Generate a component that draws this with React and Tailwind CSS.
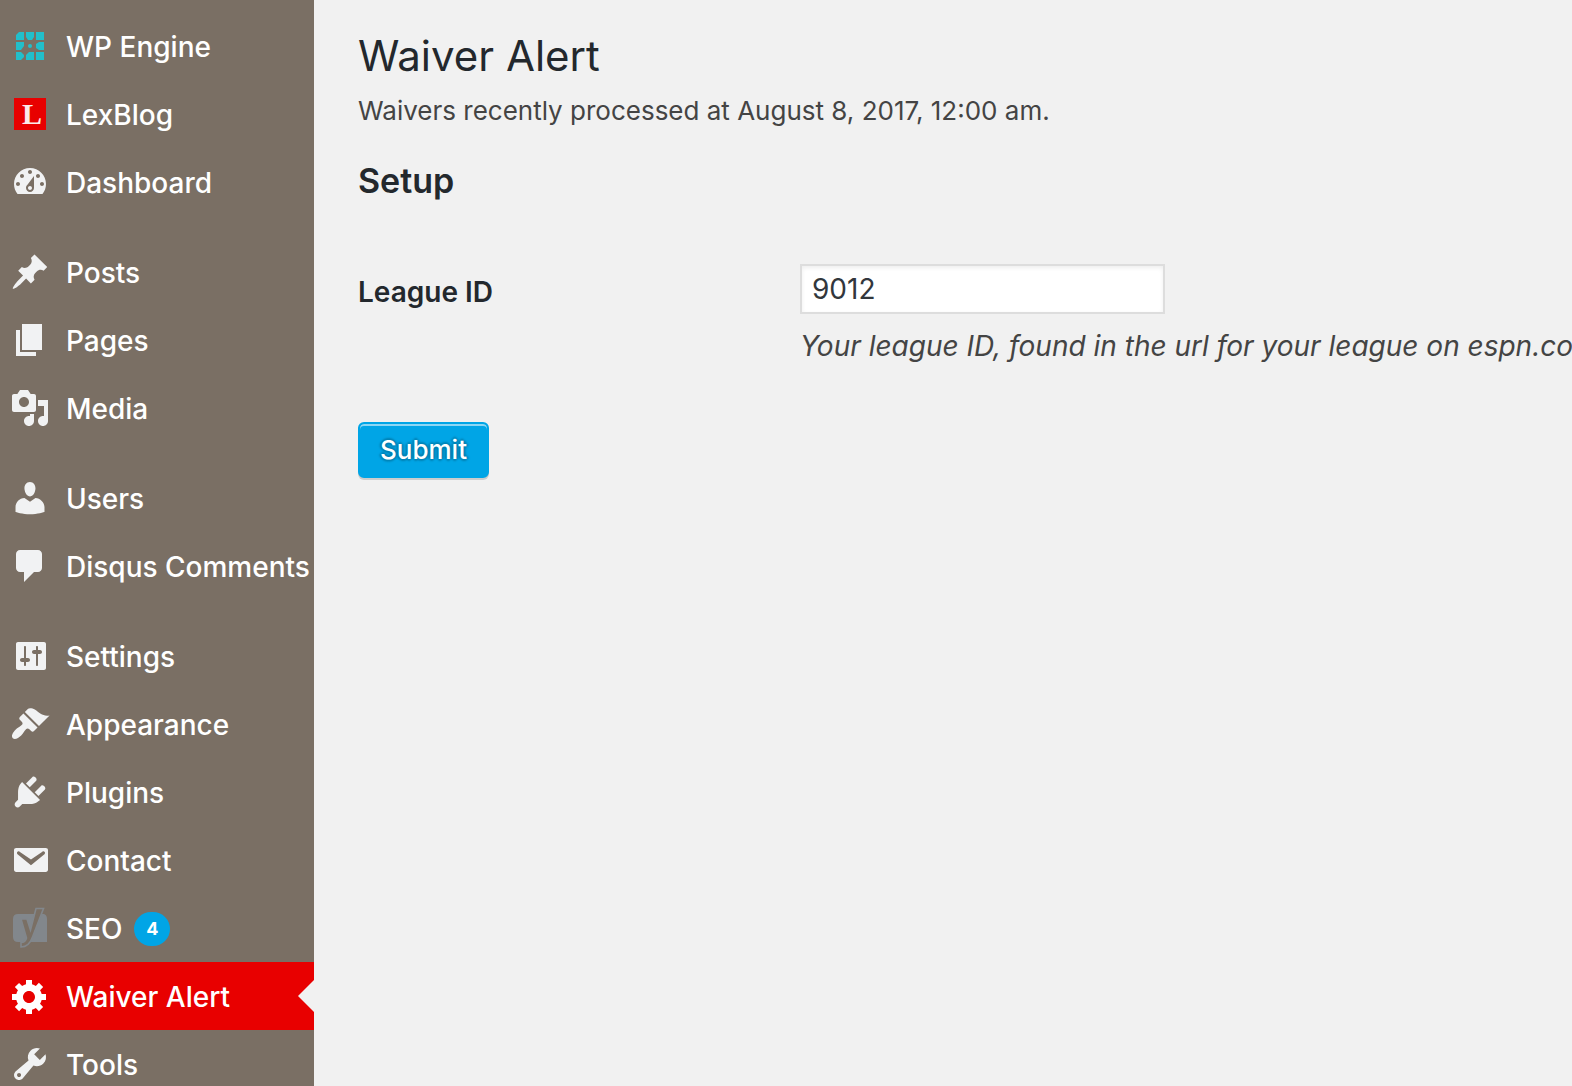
const icons = {
  dashboard:
    'M3.76 16h12.48c1.1-1.37 1.76-3.11 1.76-5 0-4.42-3.58-8-8-8s-8 3.58-8 8c0 1.89.66 3.63 1.76 5zM10 4c.55 0 1 .45 1 1s-.45 1-1 1-1-.45-1-1 .45-1 1-1zM6 6c.55 0 1 .45 1 1s-.45 1-1 1-1-.45-1-1 .45-1 1-1zm8 0c.55 0 1 .45 1 1s-.45 1-1 1-1-.45-1-1 .45-1 1-1zm-5.37 5.55L12 7v6c0 1.1-.9 2-2 2s-2-.9-2-2c0-.57.24-1.08.63-1.45zM4 10c.55 0 1 .45 1 1s-.45 1-1 1-1-.45-1-1 .45-1 1-1zm12 0c.55 0 1 .45 1 1s-.45 1-1 1-1-.45-1-1 .45-1 1-1zm-5 3c0-.55-.45-1-1-1s-1 .45-1 1 .45 1 1 1 1-.45 1-1z',
  posts:
    'M10.44 3.02l1.82-1.82 6.36 6.35-1.83 1.82c-1.05-.68-2.48-.57-3.41.36l-.75.75c-.92.93-1.04 2.35-.35 3.41l-1.83 1.82-2.41-2.41-2.8 2.79c-.42.42-3.38 2.71-3.8 2.29s1.86-3.39 2.28-3.81l2.79-2.79L4.1 9.36l1.83-1.82c1.05.69 2.48.57 3.4-.36l.75-.75c.93-.92 1.05-2.35.36-3.41z',
  pages: 'M6 15V2h10v13H6zm-1 1h8v2H3V5h2v11z',
  media:
    'M13 11V4c0-.55-.45-1-1-1h-1.67L9 1H5L3.67 3H2c-.55 0-1 .45-1 1v7c0 .55.45 1 1 1h10c.55 0 1-.45 1-1zM7 4.5c1.38 0 2.5 1.12 2.5 2.5S8.38 9.5 7 9.5 4.5 8.38 4.5 7 5.62 4.5 7 4.5zM14 6h5v10.5c0 1.38-1.12 2.5-2.5 2.5S14 17.88 14 16.5s1.12-2.5 2.5-2.5c.17 0 .34.02.5.05V9h-3V6zm-4 8.05V13h2v3.5c0 1.38-1.12 2.5-2.5 2.5S7 17.88 7 16.5 8.12 14 9.5 14c.17 0 .34.02.5.05z',
  users:
    'M10 9.25c-2.27 0-2.73-3.44-2.73-3.44C7 4.02 7.82 2 9.97 2c2.16 0 2.98 2.02 2.71 3.81 0 0-.41 3.44-2.68 3.44zm0 2.57L12.72 10c2.39 0 4.52 2.33 4.52 4.53v2.49s-3.65 1.13-7.24 1.13c-3.65 0-7.24-1.13-7.24-1.13v-2.49c0-2.25 1.94-4.48 4.47-4.48z',
  comments:
    'M5 2h9c1.1 0 2 .9 2 2v7c0 1.1-.9 2-2 2h-2l-5 5v-5H5c-1.1 0-2-.9-2-2V4c0-1.1.9-2 2-2z',
  settings:
    'M18 16V4c0-.55-.45-1-1-1H4c-.55 0-1 .45-1 1v12c0 .55.45 1 1 1h13c.55 0 1-.45 1-1zM8 11h1c.55 0 1 .45 1 1s-.45 1-1 1H8v1.5c0 .28-.22.5-.5.5s-.5-.22-.5-.5V13H6c-.55 0-1-.45-1-1s.45-1 1-1h1V5.5c0-.28.22-.5.5-.5s.5.22.5.5V11zm5-2h-1c-.55 0-1-.45-1-1s.45-1 1-1h1V5.5c0-.28.22-.5.5-.5s.5.22.5.5V7h1c.55 0 1 .45 1 1s-.45 1-1 1h-1v5.5c0 .28-.22.5-.5.5s-.5-.22-.5-.5V9z',
  appearance:
    'M14.48 11.06L7.41 3.99l1.5-1.5c.5-.56 2.3-.47 3.51.32 1.21.8 1.43 1.28 2.91 2.1 1.18.64 2.45 1.26 4.45.85zm-.71.71L6.7 4.7 4.93 6.47c-.39.39-.39 1.02 0 1.41l1.06 1.06c.39.39.39 1.03 0 1.42-.6.6-1.43 1.11-2.21 1.69-.35.26-.7.53-1.01.84C1.43 14.23.4 16.08 1.4 17.07c.99 1 2.84-.03 4.18-1.36.31-.31.58-.66.85-1.02.57-.78 1.08-1.61 1.69-2.21.39-.39 1.02-.39 1.41 0l1.06 1.06c.39.39 1.02.39 1.41 0z',
  plugins:
    'M13.11 4.36L9.87 7.6 8 5.73l3.24-3.24c.35-.34 1.05-.2 1.56.32.52.51.66 1.21.31 1.55zm-8 1.77l.91-1.12 9.01 9.01-1.19.84c-.71.71-2.63 1.16-3.82 1.16H6.14L4.9 17.26c-.59.59-1.54.59-2.12 0-.59-.58-.59-1.53 0-2.12l1.24-1.24v-3.88c0-1.13.4-3.19 1.09-3.89zm7.26 3.97l3.24-3.24c.34-.35 1.04-.21 1.55.31.52.51.66 1.21.31 1.55l-3.24 3.25z',
  contact:
    'M3.2 4h14.6C18.6 4 19 4.4 19 5.2v9.6c0 .8-.4 1.2-1.2 1.2H3.2C2.4 16 2 15.6 2 14.8V5.2C2 4.4 2.4 4 3.2 4zm7.29 8.6l6.74-5.53c.24-.2.43-.66.13-1.07-.29-.41-.82-.42-1.17-.17l-5.7 3.86L4.8 5.83c-.35-.25-.88-.24-1.17.17-.3.41-.11.87.13 1.07z',
  gear:
    'M18 12h-2.18c-.17.7-.44 1.35-.81 1.93l1.54 1.54-2.1 2.1-1.54-1.54c-.58.36-1.23.63-1.91.79V19H8v-2.18c-.68-.16-1.33-.43-1.91-.79l-1.54 1.54-2.12-2.12 1.54-1.54c-.36-.58-.63-1.23-.79-1.91H1V9.03h2.17c.16-.7.44-1.35.8-1.94L2.43 5.55l2.1-2.1 1.54 1.54c.58-.37 1.24-.64 1.93-.81V2h3v2.18c.68.16 1.33.43 1.91.79l1.54-1.54 2.12 2.12-1.54 1.54c.36.59.64 1.24.8 1.94H18V12zm-8.5 1.5c1.66 0 3-1.34 3-3s-1.34-3-3-3-3 1.34-3 3 1.34 3 3 3z',
  tools:
    'M16.68 9.77c-1.34 1.34-3.3 1.67-4.95.99l-5.41 6.52c-.99.99-2.59.99-3.58 0s-.99-2.59 0-3.57l6.52-5.42c-.68-1.65-.35-3.61.99-4.95 1.28-1.28 3.12-1.62 4.72-1.06l-2.89 2.89 2.82 2.82 2.86-2.87c.53 1.58.18 3.39-1.08 4.65zM3.81 16.21c.4.39 1.04.39 1.43 0 .4-.4.4-1.04 0-1.43-.39-.4-1.03-.4-1.43 0-.39.39-.39 1.03 0 1.43z',
};

function MenuIcon({ name }) {
  return (
    <svg viewBox="0 0 20 20" className="size-10" fill="currentColor" fillRule="evenodd" aria-hidden="true">
      <path d={icons[name]} />
    </svg>
  );
}

function EngineLogo() {
  return (
    <svg viewBox="0 0 40 40" className="size-10" fill="#22bfcb" aria-hidden="true">
      <path d="M9 6h5v8H6V9z" />
      <path d="M16 6h8v5l-2 3h-4l-2-3z" />
      <path d="M26 6h8v8h-8z" />
      <path d="M6 16h8v4l-3 4H6z" />
      <circle cx="20" cy="20" r="2" />
      <path d="M34 16h-5l-3 2v4l3 2h5z" />
      <path d="M6 26h5l3 3v2l-3 3H6z" />
      <path d="M16 34h8v-8h-5l-3 3z" />
      <path d="M26 26h8v8h-8z" />
    </svg>
  );
}

function LexLogo() {
  return (
    <span className="flex size-8 items-center justify-center bg-[#e80000] pl-1 font-['Liberation_Serif',serif] text-[30px] leading-8 font-bold text-[#fbeaea]">
      L
    </span>
  );
}

function YoastLogo() {
  return (
    <svg viewBox="0 0 40 40" className="size-10 overflow-visible" aria-hidden="true">
      <path fill="#82878c" d="M8 6h26q3 1 3 5v23H8q-5 0-5-5V11q0-5 5-5z" />
      <path
        fill="#7a6f64"
        stroke="#82878c"
        strokeWidth="1.6"
        d="M26 .5h7.500L22.500 29q-3.500 10-11.500 10v-4.500q4.500 0 5.500-4.500L11 11h6l3.500 11z"
      />
    </svg>
  );
}

const groups = [
  [
    { label: 'WP Engine', icon: <EngineLogo /> },
    { label: 'LexBlog', icon: <LexLogo /> },
    { label: 'Dashboard', icon: <MenuIcon name="dashboard" /> },
  ],
  [
    { label: 'Posts', icon: <MenuIcon name="posts" /> },
    { label: 'Pages', icon: <MenuIcon name="pages" /> },
    { label: 'Media', icon: <MenuIcon name="media" /> },
  ],
  [
    { label: 'Users', icon: <MenuIcon name="users" /> },
    { label: 'Disqus Comments', icon: <MenuIcon name="comments" /> },
  ],
  [
    { label: 'Settings', icon: <MenuIcon name="settings" /> },
    { label: 'Appearance', icon: <MenuIcon name="appearance" /> },
    { label: 'Plugins', icon: <MenuIcon name="plugins" /> },
    { label: 'Contact', icon: <MenuIcon name="contact" /> },
    { label: 'SEO', icon: <YoastLogo />, count: 4 },
    { label: 'Waiver Alert', icon: <MenuIcon name="gear" />, active: true },
    { label: 'Tools', icon: <MenuIcon name="tools" /> },
  ],
];

function MenuItem({ label, icon, count, active }) {
  return (
    <li>
      <a
        href="#"
        aria-current={active ? 'page' : undefined}
        className={
          active
            ? 'relative flex h-17 items-center bg-[#e80000] pl-2.5 text-white'
            : 'flex h-17 items-center pl-2.5 text-[#f1f2f3]'
        }
      >
        <span className="flex w-10 shrink-0 justify-center">{icon}</span>
        <span className="ml-4 flex items-center pt-0.5 text-[28px] leading-9 font-medium whitespace-nowrap text-white">
          {label}
          {count && (
            <span className="ml-3 flex h-[34px] w-9 items-center justify-center rounded-full bg-[#00a5e6] text-lg font-bold text-white">
              {count}
            </span>
          )}
        </span>
        {active && (
          <span className="absolute top-1/2 right-0 -translate-y-1/2 border-y-16 border-r-16 border-y-transparent border-r-[#f1f1f1]" />
        )}
      </a>
    </li>
  );
}

export default function App() {
  return (
    <div className="flex h-screen overflow-hidden bg-[#f1f1f1] font-['Inter','Liberation_Sans',sans-serif] text-[#444]">
      <nav aria-label="Admin menu" className="flex w-[314px] shrink-0 flex-col gap-[22px] bg-[#7a6f64] pt-3">
        {groups.map((items) => (
          <ul key={items[0].label}>
            {items.map((item) => (
              <MenuItem key={item.label} {...item} />
            ))}
          </ul>
        ))}
      </nav>
      <main className="min-w-0 flex-1 overflow-hidden pt-7 pl-11">
        <h1 className="text-[42px] leading-14 text-[#23282d]">Waiver Alert</h1>
        <p className="mt-[7px] text-[26px] leading-10">Waivers recently processed at August 8, 2017, 12:00 am.</p>
        <h2 className="mt-[30px] text-[34px] leading-10 font-semibold text-[#23282d]">Setup</h2>
        <form onSubmit={(e) => e.preventDefault()}>
          <div className="mt-[63px] flex">
            <label htmlFor="league-id" className="w-[442px] shrink-0 pt-2 text-[28px] leading-10 font-semibold text-[#23282d]">
              League ID
            </label>
            <div>
              <input
                id="league-id"
                type="text"
                defaultValue="9012"
                aria-describedby="league-help"
                className="block h-[50px] w-[365px] border-2 border-[#ddd] bg-white px-2.5 text-[28px] text-[#32373c] shadow-[inset_0_2px_4px_rgba(0,0,0,0.07)] outline-none"
              />
              <p id="league-help" className="mt-3 text-[28px] leading-10 whitespace-nowrap italic">
                Your league ID, found in the url for your league on espn.com
              </p>
            </div>
          </div>
          <button
            type="submit"
            className="mt-14 h-14 rounded-md border-2 border-[#00a5e6] bg-[#00a5e6] px-5 text-[26px] leading-10 font-medium text-white shadow-[inset_0_2px_0_rgba(255,255,255,0.55),0_2px_0_rgba(0,0,0,0.15)] [text-shadow:0_-2px_2px_#0081b3,2px_0_2px_#0081b3,0_2px_2px_#0081b3,-2px_0_2px_#0081b3]"
          >
            Submit
          </button>
        </form>
      </main>
    </div>
  );
}
